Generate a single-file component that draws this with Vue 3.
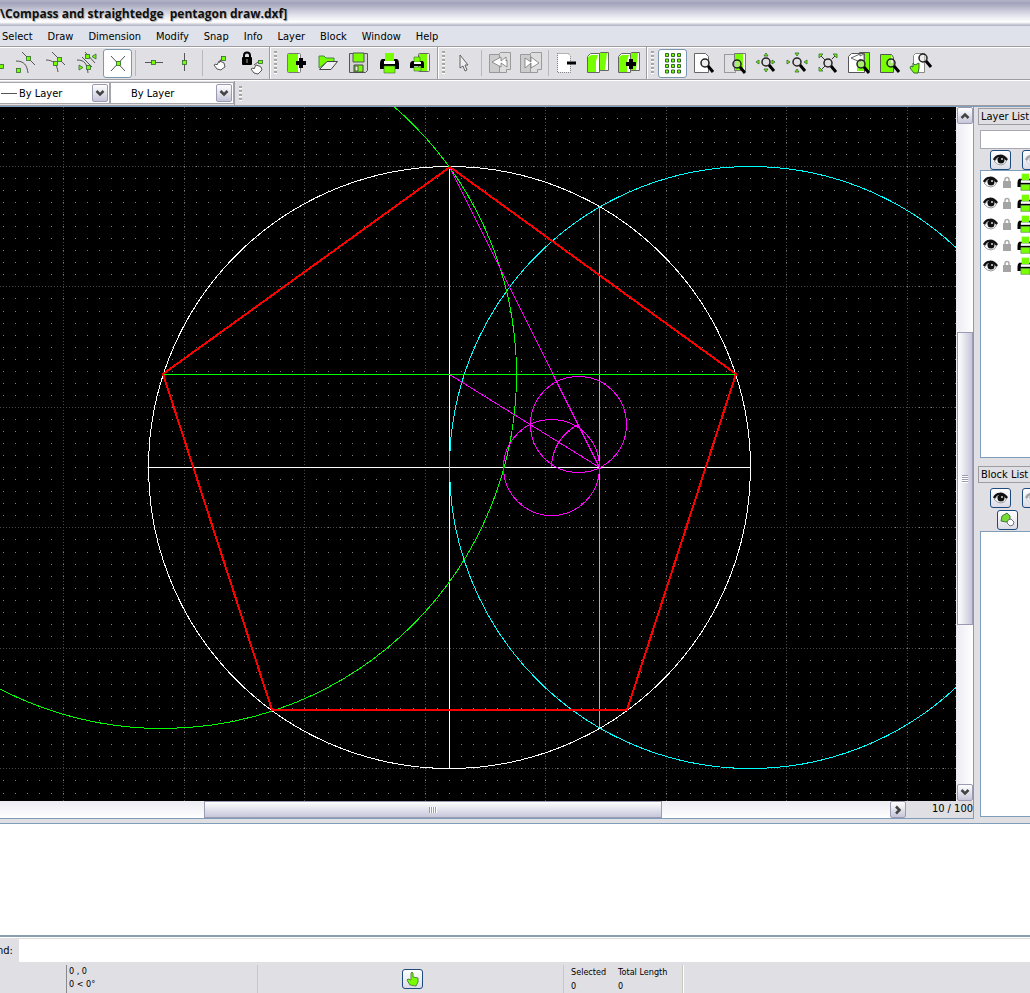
<script setup>
import { ref } from 'vue'

const title = '\\Compass and straightedge\u00a0 pentagon draw.dxf]'
const menus = ['Select', 'Draw', 'Dimension', 'Modify', 'Snap', 'Info', 'Layer', 'Block', 'Window', 'Help']

const groups = [
  { handle: false, items: ['snap-end', 'snap-on', 'snap-entity', 'snap-auto', '*snap-cross', '|', 'restrict-h', 'restrict-v', '|', 'rel-zero', 'lock-zero'] },
  { handle: true, items: ['doc-new', 'open', 'save', 'print', 'preview'] },
  { handle: true, items: ['cursor', '|', 'undo', 'redo', '|', 'cut', 'copy', 'paste'] },
  { handle: true, items: ['*grid', 'zoom-redraw', 'zoom-window', 'zoom-in', 'zoom-out', 'zoom-auto', 'zoom-prev', 'zoom-page', 'zoom-pan'] }
]

const layers = [1, 2, 3, 4, 5]
const lineWidth = ref('By Layer')
const lineType = ref('By Layer')
const layerFilter = ref('')
const command = ref('')

// grid: ten dot steps per major line, drawing units are canvas pixels
const step = 12.05
const majorX = []
const majorY = []
let dots = ''
for (let i = 0; i < 200; i++) {
  const x = Math.floor(3.3 + i * step)
  if (i % 10 === 5) majorX.push(x)
  for (let j = 0; j < 110; j++) {
    const y = Math.floor(11.2 + j * step)
    dots += `M${x} ${y}h1v1h-1z`
  }
}
for (let j = 4; j < 110; j += 10) majorY.push(Math.floor(11.2 + j * step))
</script>

<template>
  <div class="app">
    <svg class="defs" aria-hidden="true">
      <symbol id="snap-end" viewBox="0 0 24 24"><path d="M8 6L20 18" stroke="#555" /><rect x="17.500" y="13.500" width="4" height="4" class="nd" /></symbol>
      <symbol id="snap-on" viewBox="0 0 24 24"><path d="M9 1L22 14M3 10C11 10 14 14 15 22" class="ln" /><rect x="13.500" y="5.500" width="4" height="4" class="nd" /><rect x="3.500" y="17.500" width="4" height="4" class="nd" /></symbol>
      <symbol id="snap-entity" viewBox="0 0 24 24"><path d="M8 1L21 14M2 9C9 9 13 13 14 21" class="ln" /><rect x="13.500" y="6.500" width="4" height="4" class="nd" /><rect x="9.500" y="10.500" width="4" height="4" class="nd" /></symbol>
      <symbol id="snap-auto" viewBox="0 0 24 24"><path d="M10 1L20 12M2 9C10 9 12 13 13 22M7 6l10 10" class="ln" /><rect x="10.500" y="3.500" width="4" height="4" class="nd" /><rect x="11.500" y="14.500" width="4" height="4" class="nd" /><path d="M21 3v5l-4-2.500zM4 14v5l4-2.500z" class="nd" /></symbol>
      <symbol id="snap-cross" viewBox="0 0 24 24"><path d="M5 5L19 20M19 5L5 20" class="ln" /><rect x="10.500" y="10.500" width="4" height="4" class="nd" /></symbol>
      <symbol id="restrict-h" viewBox="0 0 24 24"><path d="M3 11.500H21" class="ln" /><rect x="9.500" y="9.500" width="4" height="4" class="nd" /></symbol>
      <symbol id="restrict-v" viewBox="0 0 24 24"><path d="M11.500 2V20" class="ln" /><rect x="9.500" y="9.500" width="4" height="4" class="nd" /></symbol>
      <symbol id="rel-zero" viewBox="0 0 24 24"><path d="M8 18l-3-4 2-1 1 1 2-4 3 1 2 1 1 4-3 2-1 1z" fill="#fff" stroke="#444" stroke-width=".9" /><path d="M10 12l3-5" class="ln" /><rect x="12.500" y="5.500" width="4" height="4" class="nd" /></symbol>
      <symbol id="lock-zero" viewBox="0 0 24 24"><path d="M4 8V4.500a3 3 0 0 1 6 0V8" fill="none" stroke="#000" stroke-width="2" /><rect x="2" y="6" width="10" height="8" rx="1" /><path d="M7 8v4" stroke="#aaa" /><path d="M14 22l-3-4 2-1 1 1 2-4 3 1 2 1 1 3-3 3-1 1z" fill="#fff" stroke="#444" stroke-width=".9" /><path d="M14 14l4-3" class="ln" /><rect x="18.500" y="9.500" width="4" height="3" class="nd" /></symbol>
      <symbol id="doc-new" viewBox="0 0 24 24"><rect x="3.500" y="2.500" width="13" height="19" rx="1" fill="#fff" stroke="#777" /><path d="M4 3h10v18H4z" fill="#7f0" /><path d="M12 12h10M17 7v10" stroke="#000" stroke-width="4" /></symbol>
      <symbol id="open" viewBox="0 0 24 24"><path d="M4 17V5h5l2 2h8v4h-7z" fill="#7f0" stroke="#484" /><path d="M4.500 18.500L12 10.500H22.500L16 18.500z" fill="#eee" stroke="#444" /></symbol>
      <symbol id="save" viewBox="0 0 24 24"><path d="M3.500 2.500h18v17l-2 2h-16z" fill="#d4d4d4" stroke="#555" /><path d="M7 2h11v9H7z" fill="#7f0" stroke="#555" /><path d="M8 14h9v7H8z" fill="#7f0" stroke="#444" /><path d="M9 15h3v5H9z" fill="#eee" stroke="#555" /></symbol>
      <symbol id="print" viewBox="0 0 24 24"><path d="M5 8h15q2 1 2 5v5h-4v-3H7v3H3v-5q0-4 2-5z" /><path d="M8 2h9v8H8z" fill="#7f0" /><path d="M7 10h11v3H7z" fill="#fff" /><path d="M7 15h11v7H7z" fill="#7f0" stroke="#464" stroke-width=".6" /></symbol>
      <symbol id="preview" viewBox="0 0 24 24"><rect x="10.500" y="2.500" width="11" height="18" rx="1" fill="#fff" stroke="#666" /><path d="M11 3h8v17h-8z" fill="#7f0" /><path d="M4 10h11q1 1 1 3v4h-3v-2H6v2H2v-4q0-2 2-3z" /><path d="M6 6h6v5H6zM6 16h7v4H6z" fill="#7f0" stroke="#464" stroke-width=".6" /><path d="M6 11h7v2H6z" fill="#fff" /></symbol>
      <symbol id="cursor" viewBox="0 0 24 24"><path d="M8 4v13l3-2 2 5 2-1-2-5h3z" fill="#eee" stroke="#555" stroke-width=".9" /></symbol>
      <symbol id="undo" viewBox="0 0 24 24"><path d="M10.500 3.500l2-2h10v17h-4v3h-8z" fill="#ddd" stroke="#999" /><path d="M1.500 3.500h10v18h-10z" fill="#ccc" stroke="#999" /><path d="M18 6v4l1-1v7l-6-4v4l-9-5 9-5v4z" fill="#fff" stroke="#777" stroke-width=".8" /></symbol>
      <symbol id="redo" viewBox="0 0 24 24"><path d="M10.500 3.500l2-2h10v17h-4v3h-8z" fill="#ddd" stroke="#999" /><path d="M1.500 3.500h10v18h-10z" fill="#ccc" stroke="#999" /><path d="M6 7l6 4V6l8 6-8 5v-5l-6 5z" fill="#fff" stroke="#777" stroke-width=".8" /></symbol>
      <symbol id="cut" viewBox="0 0 24 24"><path d="M2.500 2.500h11l2 3v16h-13z" fill="#fff" stroke="#777" stroke-dasharray="1 1" /><path d="M12 12h9" stroke="#000" stroke-width="3" /></symbol>
      <symbol id="copy" viewBox="0 0 24 24"><path d="M12.500 3.500l2-2h8v18h-10z" fill="#fff" stroke="#666" /><path d="M14 2h7l-2 17h-5z" fill="#7f0" /><path d="M1.500 5.500l3-3h9v19h-12z" fill="#fff" stroke="#666" /><path d="M2 6l3-2h7l-2 6v11H2z" fill="#7f0" /></symbol>
      <symbol id="paste" viewBox="0 0 24 24"><path d="M12.500 3.500l2-2h8v18h-10z" fill="#fff" stroke="#666" /><path d="M14 2h7l-2 17h-5z" fill="#7f0" /><path d="M1.500 5.500l3-3h9v19h-12z" fill="#fff" stroke="#666" /><path d="M2 6l3-2h7l-2 6v11H2z" fill="#7f0" /><path d="M9 13h10M14 8v10" stroke="#000" stroke-width="4" /></symbol>
      <symbol id="grid" viewBox="0 0 24 24"><g fill="#7f0" stroke="#363"><path v-for="r in 12" :key="r" :d="`M${4.5 + ((r - 1) % 3) * 6} ${2.5 + Math.floor((r - 1) / 3) * 5.5}h3v3h-3z`" /></g></symbol>
      <symbol id="mag" viewBox="0 0 24 24"><circle cx="13" cy="12" r="4" fill="#ddd" fill-opacity=".5" stroke="#222" stroke-width="1.500" /><path d="M16 15l5 6" stroke="#000" stroke-width="3" /></symbol>
      <symbol id="zoom-redraw" viewBox="0 0 24 24"><path d="M2.500 2.500h11l3 3v16h-14z" fill="#fff" stroke="#666" /><use href="#mag" width="24" height="24" /></symbol>
      <symbol id="zoom-window" viewBox="0 0 24 24"><path d="M1.500 3.500h11v18h-11z" fill="none" stroke="#555" stroke-dasharray="1 1" /><path d="M11.500 2.500h11v17h-11z" fill="#7f0" stroke="#777" /><path d="M20 3h2v16h-2z" fill="#fff" /><use href="#mag" width="24" height="24" x="1" y="1" /></symbol>
      <symbol id="zoom-in" viewBox="0 0 24 24"><use href="#mag" width="24" height="24" x="-1" y="-1" /><path d="M10 5l2-3 2 3zM10 18l2 3 2-3zM5 9v4l-3-2zM18 9v4l3-2z" class="nd" /></symbol>
      <symbol id="zoom-out" viewBox="0 0 24 24"><use href="#mag" width="24" height="24" x="-1" y="-1" /><path d="M10 2l2 3 2-3zM10 21l2-3 2 3zM2 9v4l3-2zM22 9v4l-3-2z" class="nd" /></symbol>
      <symbol id="zoom-auto" viewBox="0 0 24 24"><path d="M4 4l5 5M20 4l-4 4M4 20l5-5" stroke="#333" /><use href="#mag" width="24" height="24" x="-1" /><path d="M3 3h4l-4 4zM17 3h4v4zM3 20v-4l4 4z" class="nd" /></symbol>
      <symbol id="zoom-prev" viewBox="0 0 24 24"><path d="M12.500 1.500h10v18h-10z" fill="#7f0" stroke="#555" /><path d="M1.500 5.500l3-3h13v19h-16z" fill="#fff" stroke="#555" /><path d="M10 10h7v10h-7z" fill="#7f0" /><path d="M17 3v8l-4-3v3L4 7l9-4v2z" fill="#fff" stroke="#666" /><use href="#mag" width="24" height="24" x="1" y="1" /></symbol>
      <symbol id="zoom-page" viewBox="0 0 24 24"><path d="M2.500 3.500h11l2 3v15h-13z" fill="#7f0" stroke="#555" /><path d="M13 4l2 3v5h-2z" fill="#fff" /><use href="#mag" width="24" height="24" /></symbol>
      <symbol id="zoom-pan" viewBox="0 0 24 24"><path d="M4.500 4.500l2-2h9v19h-11z" fill="#fff" stroke="#888" /><path d="M5 22l-4-5 1-2 2 1v-4l2 2 4-2v5l-1 5z" fill="#7f0" stroke="#363" /><use href="#mag" width="24" height="24" x="1" y="-5" /></symbol>
      <symbol id="eye" viewBox="0 0 16 12"><path d="M1 7Q6 2 14 6Q12 11 8 11Q4 11 1 7z" fill="#fff" stroke="#999" /><path d="M1 6C3 1 10 0 14 6" fill="none" stroke="#111" stroke-width="2.500" /><circle cx="8" cy="6" r="3.500" fill="#111" /><circle cx="9" cy="5" r="1" fill="#ddd" /></symbol>
      <symbol id="lock" viewBox="0 0 10 12"><path d="M3 6V3.500a2 2 0 0 1 4 0V6" fill="none" stroke="#aaa" stroke-width="1.500" /><path d="M1 5h8v7H1z" fill="#a4a4a4" /></symbol>
      <symbol id="hand" viewBox="0 0 16 16"><path d="M5 14l-3-5 1-1 3 1V2l1-1 1 1v4l5 1v4l-2 4z" fill="#7f0" stroke="#584" /></symbol>
      <symbol id="insert" viewBox="0 0 16 16"><path d="M1 9l1-5 5-3 3 3v5l-4 1z" fill="#7d3" stroke="#474" /><path d="M8 8l3-1 3 3-1 3-3 1-3-3z" fill="#fff" stroke="#777" /></symbol>
      <symbol id="chev" viewBox="0 0 10 8"><path d="M1.500 2L5 5.500 8.500 2" fill="none" stroke="#444" stroke-width="2.500" /></symbol>
    </svg>

    <header class="title">{{ title }}</header>
    <nav class="menu">
      <button v-for="m in menus" :key="m" type="button">{{ m }}</button>
    </nav>

    <div class="toolbar">
      <div v-for="(g, i) in groups" :key="i" class="group" :class="{ first: i === 0, last: i === 3 }">
        <i v-if="g.handle" class="handle"></i>
        <template v-for="(t, k) in g.items" :key="k">
          <i v-if="t === '|'" class="sep"></i>
          <button v-else type="button" class="tool" :class="{ on: t[0] === '*' }" :aria-label="t.replace('*', '')">
            <svg width="24" height="24"><use :href="'#' + t.replace('*', '')" /></svg>
          </button>
        </template>
      </div>
    </div>

    <div class="toolbar pens">
      <div class="combo wide">
        <select v-model="lineWidth" aria-label="Line width"><option>By Layer</option></select>
        <i class="stroke"></i>
        <span class="drop"><svg width="10" height="8"><use href="#chev" /></svg></span>
      </div>
      <div class="combo">
        <select v-model="lineType" aria-label="Line type"><option>By Layer</option></select>
        <span class="drop"><svg width="10" height="8"><use href="#chev" /></svg></span>
      </div>
      <i class="edge"></i>
      <i class="handle"></i>
    </div>

    <main class="work">
      <section class="view">
        <svg class="canvas">
          <g shape-rendering="crispEdges" fill="none">
            <path :d="dots" fill="#808080" />
            <g stroke="#484848" stroke-dasharray="1 2">
              <line v-for="x in majorX" :key="'x' + x" :x1="x + 0.5" :x2="x + 0.5" y1="0" y2="100%" />
              <line v-for="y in majorY" :key="'y' + y" :y1="y + 0.5" :y2="y + 0.5" x1="0" x2="100%" />
            </g>
            <g transform="translate(0 -107)">
              <circle cx="449.500" cy="467.500" r="301" stroke="#fff" />
              <path d="M449.500 166V768M148 467.500H750" stroke="#fff" />
              <circle cx="750.500" cy="467.500" r="301" stroke="#0ff" />
              <path d="M599.500 207V728" stroke="#0ff" />
              <circle cx="162.500" cy="374.500" r="354" stroke="#0f0" />
              <path d="M163 374.500H736" stroke="#0f0" />
              <g stroke="#f0f">
                <circle cx="578.500" cy="424.500" r="48" />
                <circle cx="551.500" cy="467.500" r="48" />
                <path d="M551.500 467.500A48 48 0 0 1 578.500 424.500M449.500 167L599.500 467.500L449.500 374.500" />
              </g>
              <path d="M450 167L736 374L627 710H272L163 374z" stroke="#f00" stroke-width="2" />
            </g>
          </g>
        </svg>
        <div class="vbar">
          <button type="button" class="sb up" aria-label="Scroll up"><svg width="10" height="8"><use href="#chev" /></svg></button>
          <i class="vbefore"></i><i class="vthumb"><b></b></i><i class="vafter"></i>
          <button type="button" class="sb" aria-label="Scroll down"><svg width="10" height="8"><use href="#chev" /></svg></button>
        </div>
        <div class="bottom">
          <div class="hbar">
            <i class="hbefore"></i><i class="hthumb"><b></b></i><i class="hafter"></i>
            <button type="button" class="sb right" aria-label="Scroll right"><svg width="10" height="8"><use href="#chev" /></svg></button>
          </div>
          <span class="zoom">10 / 100</span>
        </div>
      </section>

      <aside class="dock">
        <section class="panel layers">
          <h2>Layer List</h2>
          <input v-model="layerFilter" type="text" aria-label="Layer filter" />
          <div class="acts">
            <button type="button" class="mini" aria-label="Show all layers"><svg width="16" height="12"><use href="#eye" /></svg></button>
            <button type="button" class="mini" aria-label="Hide all layers"><svg class="pale" width="16" height="12"><use href="#eye" /></svg></button>
          </div>
          <ul>
            <li v-for="l in layers" :key="l">
              <svg width="16" height="12"><use href="#eye" /></svg>
              <svg width="10" height="12"><use href="#lock" /></svg>
              <svg width="20" height="20"><use href="#print" /></svg>
            </li>
          </ul>
        </section>
        <section class="panel blocks">
          <h2>Block List</h2>
          <div class="acts">
            <button type="button" class="mini" aria-label="Show all blocks"><svg width="16" height="12"><use href="#eye" /></svg></button>
            <button type="button" class="mini" aria-label="Hide all blocks"><svg class="pale" width="16" height="12"><use href="#eye" /></svg></button>
          </div>
          <div class="acts second">
            <button type="button" class="mini" aria-label="Insert block"><svg width="16" height="16"><use href="#insert" /></svg></button>
          </div>
          <ul></ul>
        </section>
      </aside>
    </main>

    <section class="history"></section>
    <div class="command">
      <label for="cmd">nd:</label>
      <input id="cmd" v-model="command" type="text" />
    </div>

    <footer class="status">
      <div class="coords"><span>0 , 0</span><span>0 &lt; 0°</span></div>
      <div class="mouse"><button type="button" class="mini" aria-label="Pan"><svg width="16" height="16"><use href="#hand" /></svg></button></div>
      <dl class="totals">
        <div><dt>Selected</dt><dd>0</dd></div>
        <div><dt>Total Length</dt><dd>0</dd></div>
      </dl>
    </footer>
  </div>
</template>

<style>
body { background: #e0dfe3; }
</style>

<style scoped>
* { box-sizing: border-box; }
.app { display: flex; flex-direction: column; height: 100vh; overflow: hidden; background: #e0dfe3; color: #000; font: 11px/14px "DejaVu Sans Condensed", "Noto Sans", sans-serif; }
.defs { position: absolute; width: 0; height: 0; }
.ln { fill: none; stroke: #555; }
.nd { fill: #7f0; stroke: #363; stroke-width: .8; }
button { font: inherit; color: inherit; border: 0; background: none; padding: 0; margin: 0; }
svg { display: block; flex: none; }
i { display: block; flex: none; }

.title { height: 26px; flex: none; white-space: pre; overflow: hidden; font: bold 12px/27px "Open Sans", sans-serif; color: #0e1010; text-shadow: 1px 1px 1px #aaa; background: linear-gradient(#b4b4c8 0, #a2a2ba 12%, #e4e4ee 60%, #fff 85%, #b8b8c8 97%); }
.menu { height: 20px; flex: none; display: flex; gap: 15px; padding-left: 2px; background: #dfe2ea; }
.menu button { line-height: 22px; }

.toolbar { display: flex; height: 34px; flex: none; border-top: 1px solid #9d9da1; border-bottom: 1px solid #9d9da1; box-shadow: inset 0 1px #fff; overflow: hidden; }
.group { display: flex; align-items: center; flex: none; gap: 2px; padding-right: 3px; border-right: 1px solid #9d9da1; box-shadow: 1px 0 #fff; margin-right: 1px; }
.group.first { margin-left: -21px; }
.group.last { border: 0; box-shadow: none; }
.handle { width: 3px; height: 24px; margin: 0 2px 0 3px; background: repeating-linear-gradient(#a8a8a0 0 2px, #fff 2px 3px, #e0dfe3 3px 4px); }
.sep { width: 1px; height: 26px; margin: 0 1px; background: #b8b8bc; }
.tool { width: 29px; height: 29px; flex: none; display: grid; place-items: center; border-radius: 3px; }
.tool.on { background: #fff; border: 1px solid #7c98b0; }

.pens { height: 26px; align-items: center; border-top-color: #fff; box-shadow: none; }
.combo { position: relative; width: 124px; height: 22px; flex: none; border: 1px solid #a6a6aa; background: #fff; display: flex; }
.combo.wide { width: 110px; border-left: 0; }
.combo select { appearance: none; border: 0; margin: 0; flex: 1; min-width: 0; background: transparent; color: #000; font: inherit; padding: 1px 0 0 20px; }
.combo.wide select { padding-left: 19px; }
.stroke { position: absolute; left: 1px; top: 10px; width: 16px; height: 1px; background: #555; }
.drop { position: absolute; right: 1px; top: 1px; width: 16px; bottom: 1px; display: grid; place-items: center; pointer-events: none; }
.drop, .sb { border: 1px solid #9a9ab2; border-radius: 2px; background: linear-gradient(#fff, #c6c6da); }
.edge { width: 1px; height: 25px; background: #9d9da1; }
.pens .handle { height: 15px; margin-left: 4px; }

.work { flex: 1; min-height: 0; display: grid; grid-template-columns: 1fr 56px; border-top: 1px solid #7f9db9; padding-bottom: 4px; overflow: hidden; }
.view { display: grid; grid-template: minmax(0, 1fr) 17px / minmax(0, 1fr) 17px; border-right: 1px solid #7f9db9; border-bottom: 1px solid #7f9db9; min-height: 0; }
.canvas { width: 100%; height: 100%; background: #000; }
.vbar { display: flex; flex-direction: column; align-items: center; background: linear-gradient(90deg, #ebebf2, #fff); }
.sb { width: 16px; height: 17px; flex: none; display: grid; place-items: center; }
.up svg { transform: rotate(180deg); }
.right svg { transform: rotate(-90deg); }
.vbefore { flex: 209 0 0; }
.vthumb { flex: 292 0 0; width: 16px; display: grid; place-items: center; border: 1px solid #9a9ab2; background: linear-gradient(90deg, #fff, #c6c6da); }
.vafter { flex: 159 0 0; }
.vthumb b { width: 6px; height: 8px; background: repeating-linear-gradient(#9a9ab0 0 1px, #fff 1px 2px); }
.bottom { grid-column: 1 / 3; display: flex; }
.hbar { flex: 1; display: flex; background: linear-gradient(#ebebf2, #fff); }
.hbefore { flex: 204 0 0; }
.hthumb { flex: 457 0 0; display: grid; place-items: center; border: 1px solid #9a9ab2; background: linear-gradient(#fff, #c6c6da); }
.hafter { flex: 228 0 0; }
.hthumb b { width: 8px; height: 6px; background: repeating-linear-gradient(90deg, #9a9ab0 0 1px, #fff 1px 2px); }
.zoom { width: 67px; text-align: right; line-height: 15px; }

.dock { padding: 1px 0 2px 4px; display: flex; flex-direction: column; gap: 8px; min-width: 0; overflow: hidden; }
.panel { display: flex; flex-direction: column; min-height: 0; }
.layers { flex: 349 0 0; }
.blocks { flex: 351 0 0; }
h2 { margin: 0 0 5px 0; height: 17px; flex: none; border: 1px solid #9d9da1; border-right: 0; padding-left: 2px; font: inherit; line-height: 15px; white-space: nowrap; }
.panel input { width: auto; min-width: 0; height: 19px; flex: none; margin: 0 0 1px 2px; border: 1px solid #a8a8b0; border-right: 0; background: #fff; font: inherit; padding: 0 2px; }
.acts { display: flex; gap: 11px; padding-left: 12px; height: 20px; flex: none; }
.acts.second { padding-left: 19px; margin: 2px 0 1px; }
.mini { width: 21px; height: 20px; flex: none; display: grid; place-items: center; border: 1px solid #1c4a7c; border-radius: 3px; background: linear-gradient(#fff, #dcdce8); }
.pale { opacity: .35; }
ul { list-style: none; flex: 1; margin: 0 0 0 2px; padding: 0; background: #fff; border: 1px solid #7f9db9; border-right: 0; overflow: hidden; }
li { height: 21px; display: flex; align-items: center; gap: 3px; padding-left: 2px; }

.history { height: 114px; flex: none; background: #fff; border-top: 1px solid #7f9db9; border-bottom: 2px solid #8a9fae; }
.command { display: flex; height: 25px; flex: none; border-top: 1px solid #fff; overflow: hidden; }
.command label { width: 22px; margin-left: -3px; line-height: 26px; }
.command input { flex: 1; min-width: 0; border: 0; border-top: 1px solid #ddd; background: #fff; font: inherit; padding: 0 4px; outline: 0; }
.status { height: 31px; flex: none; display: flex; padding: 3px 0 0 66px; font-size: 9px; line-height: 14px; }
.coords { width: 192px; display: flex; flex-direction: column; border-left: 1px solid #8a8a8e; border-right: 1px solid #c8c8bc; padding-left: 2px; line-height: 13px; }
.mouse { width: 306px; display: grid; place-items: center; padding-left: 4px; border-right: 1px solid #c8c8bc; }
.totals { display: flex; gap: 12px; margin: 0; width: 119px; padding-left: 7px; white-space: nowrap; border-right: 1px solid #c8c8bc; box-shadow: 1px 0 #fff; }
.totals dd { margin: 0; }
</style>
